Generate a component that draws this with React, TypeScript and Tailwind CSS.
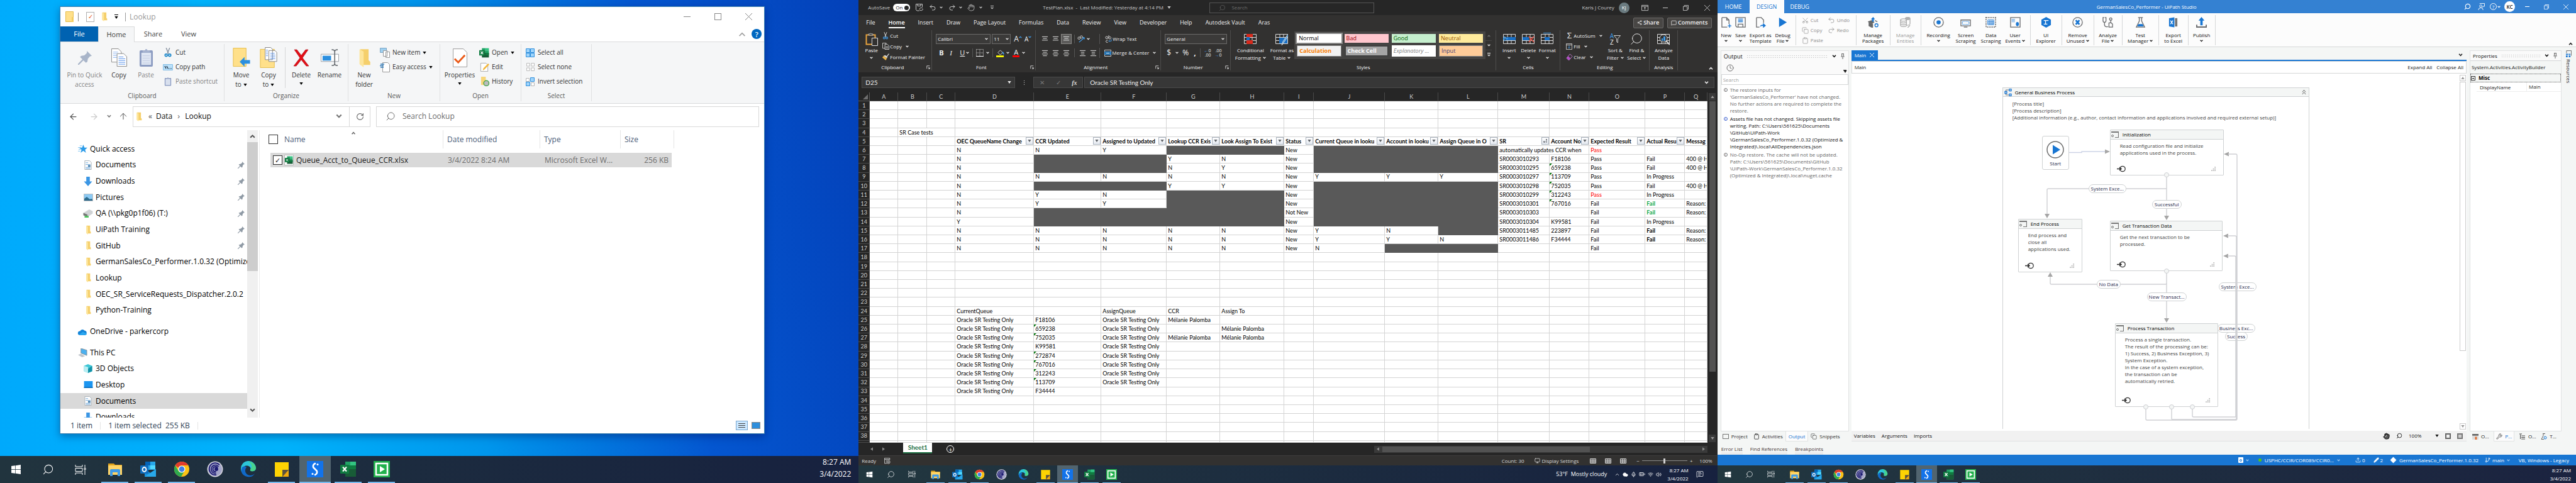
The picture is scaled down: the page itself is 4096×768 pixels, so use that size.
import type { ReactNode } from "react";
import { FaWindows } from "react-icons/fa";
import {
  Search, ArrowLeft, ArrowRight, ArrowUp, RotateCw, Undo2, Redo2, Hand, Wrench, Clock,
  Scissors, Copy, Clipboard, MessageSquare, Share2, GitBranch, Pencil, Upload,
  ChevronUp, Cloud, BatteryFull, Wifi, Volume2, Mic, MessageSquareText, Monitor,
} from "lucide-react";

/* ---------- shared bits ---------- */

function Chev({ className = "" }: { className?: string }) {
  return (
    <svg viewBox="0 0 8 6" className={`h-[4px] w-[5px] shrink-0 ${className}`} fill="none" stroke="currentColor" strokeWidth="1.8">
      <path d="M1 1l3 3 3-3" />
    </svg>
  );
}

function Tri({ className = "" }: { className?: string }) {
  return (
    <svg viewBox="0 0 8 6" className={`h-[4px] w-[6px] shrink-0 ${className}`} fill="currentColor">
      <path d="M0 0h8L4 6z" />
    </svg>
  );
}

function Folder({ className = "" }: { className?: string }) {
  return (
    <svg viewBox="0 0 16 24" className={`shrink-0 ${className}`} preserveAspectRatio="none">
      <path d="M3 1h10v14l2 2v4H3z" fill="#f5cf6b" />
      <path d="M2 1l5 3v20l-5-4z" fill="#fde59b" />
    </svg>
  );
}

function Pages({ className = "" }: { className?: string }) {
  return (
    <svg viewBox="0 0 28 32" className={className} fill="#fff" stroke="#8a8a8a">
      <path d="M1.500 1.500h11l5 5v17h-16z" />
      <path d="M4 7h8M4 10h10M4 13h10M4 16h8" stroke="#8fb6ef" />
      <path d="M10.500 9.500h11l5 5v16h-16z" />
      <path d="M13 15h8M13 18h11M13 21h11M13 24h11M13 27h11" stroke="#5a93ea" />
    </svg>
  );
}

function ClipIcon({ className = "", tint = "#8d9dc2" }: { className?: string; tint?: string }) {
  return (
    <svg viewBox="0 0 24 32" className={className}>
      <rect x="1" y="4" width="22" height="27" rx="2" fill={tint} />
      <rect x="4" y="8" width="16" height="20" fill="#dfe6f3" />
      <path d="M6 13h12M6 17h12M6 21h12M6 25h12" stroke="#c3cde2" />
      <path d="M6 8V4h4a2 2 0 014 0h4v4z" fill="#a5b2cf" />
    </svg>
  );
}

function DocIcon() {
  return (
    <svg viewBox="0 0 14 16" className="h-[15px] w-[14px]">
      <path d="M1.500.5h8l3 3v12h-11z" fill="#fdfdfd" stroke="#a9b1b8" />
      <path d="M3 4h4M3 7h8M3 12h8M3 14h8" stroke="#6fa9dc" />
      <path d="M7 8h4v3H7z" fill="#3c79a8" />
    </svg>
  );
}

function DownIcon() {
  return (
    <svg viewBox="0 0 14 16" className="h-[15px] w-[14px]" fill="#3b96e4">
      <path d="M4 0h6v8h4l-7 8-7-8h4z" />
    </svg>
  );
}

function Pin() {
  return (
    <svg viewBox="0 0 14 14" className="h-[11px] w-[11px]" fill="#8f9aa5">
      <path d="M9 0l5 5-2 .5-2 2.500-.5 3L8 12 5.500 9.500 1 14H0v-1l4.500-4.500L2 6l1.500-1 3-.5L9 2z" />
    </svg>
  );
}

function ExcelLogo({ className = "" }: { className?: string }) {
  return (
    <svg viewBox="0 0 26 26" className={className}>
      <rect x="7" y="1" width="9" height="6" fill="#21a366" />
      <rect x="16" y="1" width="9" height="6" fill="#33c481" />
      <rect x="7" y="7" width="9" height="6" fill="#107c41" />
      <rect x="16" y="7" width="9" height="6" fill="#21a366" />
      <rect x="7" y="13" width="18" height="12" fill="#185c37" />
      <rect x="16" y="13" width="9" height="6" fill="#107c41" />
      <rect x="0" y="6" width="14" height="14" rx="1" fill="#107c41" />
      <path d="M4 9.500l6 7M10 9.500l-6 7" stroke="#fff" strokeWidth="2" />
    </svg>
  );
}

/* ---------- taskbar ---------- */

const appIcons: { name: string; open?: boolean; active?: boolean; art: ReactNode }[] = [
  {
    name: "File Explorer", open: true,
    art: (<><path d="M2 4h9l2 2h11v5H2z" fill="#e0a21a" /><path d="M2 7h22v15H2z" fill="#ffd567" /><path d="M5 15a2 2 0 012-2h12a2 2 0 012 2v9h-4v-6H9v6H5z" fill="#3f9be8" /></>),
  },
  {
    name: "Outlook", open: true,
    art: (<><path d="M8 1h16v13H8z" fill="#28a8ea" /><path d="M8 1h8v6H8z" fill="#0364b8" /><path d="M16 7h8v6h-8z" fill="#50d9ff" /><path d="M7 13l9 6 9-6v12H7z" fill="#1490df" /><path d="M7 25l18-12v12z" fill="#28a8ea" /><rect x="0" y="7" width="13" height="13" rx="1" fill="#0f6cbd" /><ellipse cx="6.500" cy="13.500" rx="3" ry="3.500" fill="none" stroke="#fff" strokeWidth="1.800" /></>),
  },
  {
    name: "Chrome", open: true,
    art: (<><circle cx="13" cy="13" r="12" fill="#fbc116" /><path d="M2.600 7A12 12 0 0123.400 7H13a6 6 0 00-5.500 4z" fill="#e33b2e" /><path d="M2.600 7A12 12 0 0012 25l5-8.500A6 6 0 017.800 16z" fill="#2da94f" /><circle cx="13" cy="13" r="5.600" fill="#fff" /><circle cx="13" cy="13" r="4.400" fill="#3f7ee8" /></>),
  },
  {
    name: "Eclipse",
    art: (<><circle cx="13" cy="13" r="12.500" fill="#d5d5dd" /><circle cx="13" cy="13" r="11" fill="#a4a6c8" /><path d="M20 6a9.500 9.500 0 10-5 16M18.500 9a6.500 6.500 0 10-4 10.500M17 11a4 4 0 10-2.500 6" fill="none" stroke="#1c1a72" strokeWidth="1.800" /><circle cx="15" cy="13" r="3" fill="#1c1a72" /></>),
  },
  {
    name: "Edge",
    art: (<><path d="M1 13A12 12 0 0125 11c0 5-5 6-8 5-2-1-1-2-.5-4C16 8 10 6 6 9c-3 2-5 5-3 10a11 11 0 01-2-6z" fill="#2cc6d8" /><path d="M12 1a12 12 0 0113 10c0 4-4 6-8 5-2-1-1-2-.5-4 3 0 3-8-4.500-11z" fill="#55d86c" opacity=".7" /><path d="M10 10c-3 3-3 9 2 12 4 2 8 1 11-2-3 5-8 6-12 5C2 23 0 15 3 10c2-2 5-2 7 0z" fill="#1169c8" /></>),
  },
  {
    name: "Sticky Notes", open: true,
    art: (<><path d="M2 2h22v12l-10 11H2z" fill="#fdd303" /><path d="M14 25l10-11v11z" fill="#f1a80d" /><path d="M14 14h10L14 25z" fill="#5c5240" /></>),
  },
  {
    name: "Snagit", open: true, active: true,
    art: (<><rect width="26" height="26" fill="#1273ea" /><path d="M13 4c-4 2-4 6-1 8l3 3M13 22c4-2 4-6 1-8l-3-3" fill="none" stroke="#fff" strokeWidth="2.600" strokeLinecap="round" /><circle cx="17" cy="5.500" r="1.500" fill="#fff" /><circle cx="9" cy="20.500" r="1.500" fill="#fff" /></>),
  },
  {
    name: "Excel", open: true,
    art: (<><path d="M8 1h17v24H8z" fill="#21a366" /><path d="M8 7h17v6H8z" fill="#107c41" /><path d="M8 13h17v12H8z" fill="#185c37" /><path d="M16 1h9v6h-9z" fill="#33c481" /><rect y="6" width="14" height="14" rx="1" fill="#107c41" /><path d="M4 9.500l6 7M10 9.500l-6 7" stroke="#fff" strokeWidth="2" /></>),
  },
  {
    name: "Recorder", open: true,
    art: (<><rect width="26" height="26" fill="#22b14c" /><rect x="4" y="4" width="18" height="18" fill="none" stroke="#fff" strokeWidth="2.500" /><path d="M10 8l8 5-8 5z" fill="#fff" /></>),
  },
];

function Taskbar({ large = false, tone, children }: { large?: boolean; tone: string; children: ReactNode }) {
  const sys = large ? "w-[51px]" : "w-[34px]";
  const sysIcon = large ? "size-[17px]" : "size-[11px]";
  return (
    <nav aria-label="Taskbar" className={`flex shrink-0 text-white ${tone} ${large ? "h-[43px]" : "h-[28px]"}`}>
      <button aria-label="Start" className={`flex items-center justify-center ${sys}`}><FaWindows className={sysIcon} /></button>
      <button aria-label="Search" className={`flex items-center justify-center ${sys}`}><Search strokeWidth={1.3} className={`-scale-x-100 ${large ? "size-[19px]" : "size-[13px]"}`} /></button>
      <button aria-label="Task View" className={`mr-[3px] flex items-center justify-center ${sys}`}>
        <svg viewBox="0 0 18 18" className={large ? "size-[18px]" : "size-[12px]"} fill="none" stroke="currentColor">
          <path d="M1 1v3h11V1M1 17v-3h11v3M1 6.500h11v5H1zM16 1v4M16 10v7M15 6h2v3h-2z" />
        </svg>
      </button>
      {appIcons.map((a) => (
        <button key={a.name} aria-label={a.name} className={`flex flex-col items-center ${large ? "w-[53px]" : "w-[35px]"}`}>
          <span className={`flex flex-1 items-center justify-center pt-[1px] ${a.active ? "bg-[#51646f]" : ""} ${large ? "w-[50px]" : "w-[33px]"}`}>
            <svg viewBox="0 0 26 26" className={large ? "size-[26px]" : "size-[17px]"}>{a.art}</svg>
          </span>
          <span className={`${a.open ? "bg-[#76b9ed]" : ""} ${large ? "h-[2px]" : "h-[1px]"} ${a.active ? (large ? "w-[50px]" : "w-[33px]") : large ? "w-[43px]" : "w-[29px]"}`} />
        </button>
      ))}
      <div className="flex-1" />
      {children}
    </nav>
  );
}

/* ---------- file explorer ---------- */

function FxGroup({ label, w, children }: { label: string; w: string; children: ReactNode }) {
  return (
    <div className={`my-[3px] flex shrink-0 flex-col border-r border-[#e0e1e2] ${w}`}>
      <div className="flex flex-1">{children}</div>
      <div className="h-[17px] text-center leading-[16px] text-[#5a5a5a]">{label}</div>
    </div>
  );
}

function FxBig({ icon, lines, w, dim, drop }: { icon: ReactNode; lines: string[]; w: string; dim?: boolean; drop?: boolean }) {
  return (
    <button className={`flex flex-col items-center pt-[6px] leading-[15px] ${w} ${dim ? "text-[#838383]" : "text-[#333]"}`}>
      <span className="mb-[5px] flex h-[31px] items-center">{icon}</span>
      {lines.map((l, i) => (
        <span key={l} className="flex items-center gap-[3px] whitespace-nowrap">
          {l}
          {drop && i === lines.length - 1 && lines.length > 1 && <Tri className="text-black" />}
        </span>
      ))}
      {drop && lines.length === 1 && <Tri className="mt-[4px] text-black" />}
    </button>
  );
}

function FxSmall({ icon, label, dim, drop }: { icon: ReactNode; label: string; dim?: boolean; drop?: boolean }) {
  return (
    <button className={`flex h-[23px] items-center whitespace-nowrap ${dim ? "text-[#838383]" : "text-[#333]"}`}>
      <span className="mr-[4px] flex w-[16px] justify-center">{icon}</span>
      {label}
      {drop && <Tri className="ml-[4px] text-black" />}
    </button>
  );
}

function NavRow({ icon, label, pin, on, root }: { icon: ReactNode; label: string; pin?: boolean; on?: boolean; root?: boolean }) {
  return (
    <li className={`flex min-h-0 flex-1 items-center ${on ? "bg-[#d9d9d9]" : ""} ${root ? "pl-[27px]" : "pl-[36px]"}`}>
      <span className="mr-[4px] flex w-[16px] shrink-0 justify-center">{icon}</span>
      <a href="#" className="flex-1 overflow-hidden whitespace-nowrap">{label}</a>
      {pin && <span className="mr-[4px]"><Pin /></span>}
    </li>
  );
}

function Explorer() {
  const f = <Folder className="h-[15px] w-[9px]" />;
  return (
    <section aria-label="Lookup folder" className="absolute top-[10px] right-[149px] bottom-[35px] left-[95px] flex flex-col border border-[#3a7fae] bg-white text-[12px] shadow-[0_4px_12px_rgba(0,0,60,0.35)]">
      <header className="flex h-[31px] shrink-0 items-center pl-[8px] text-[#9a9a9a]">
        <svg viewBox="0 0 14 17" className="h-[17px] w-[14px]"><path d="M.5.5h12v16H.5z" fill="#ffe08a" stroke="#e5bd4d" /><path d="M10 9h3v8h-3z" fill="#f3cd62" /></svg>
        <span className="mx-[6px] h-[14px] w-px bg-[#8a8a8a]" />
        <span className="ml-[6px] flex h-[16px] w-[13px] items-center justify-center border border-[#b0b0b0] bg-white text-[10px] text-[#e65a1b]">✓</span>
        <Folder className="ml-[11px] h-[15px] w-[10px]" />
        <span className="ml-[11px] flex flex-col items-center gap-[2px] text-black"><span className="h-px w-[6px] bg-black" /><Tri /></span>
        <span className="mr-[6px] ml-[11px] h-[14px] w-px bg-[#9a9a9a]" />
        <span>Lookup</span>
        <span className="flex-1" />
        <button aria-label="Minimize" className="flex w-[49px] justify-center"><span className="h-px w-[11px] bg-[#8a8a8a]" /></button>
        <button aria-label="Maximize" className="flex w-[49px] justify-center"><span className="size-[11px] border border-[#8a8a8a]" /></button>
        <button aria-label="Close" className="flex w-[49px] justify-center">
          <svg viewBox="0 0 11 11" className="size-[11px]" stroke="#8a8a8a"><path d="M0 0l11 11M11 0L0 11" /></svg>
        </button>
      </header>
      <div className="flex h-[25px] shrink-0 border-b border-[#dadbdc] text-[11px] text-[#444]">
        <button className="w-[60px] bg-[#0062b1] text-white">File</button>
        <button className="-mb-px w-[58px] border border-b-0 border-[#dadbdc] bg-[#f5f6f7]">Home</button>
        <button className="w-[59px]">Share</button>
        <button className="w-[54px]">View</button>
        <span className="flex-1" />
        <svg viewBox="0 0 12 8" className="mt-[9px] mr-[9px] h-[7px] w-[12px]" fill="none" stroke="#a0a0a0" strokeWidth="2"><path d="M1 7l5-5 5 5" /></svg>
        <button aria-label="Help" className="mt-[4px] mr-[4px] size-[16px] rounded-full bg-[#0067c0] text-[11px] leading-[15px] font-semibold text-white">?</button>
      </div>
      <div className="flex h-[98px] shrink-0 border-b border-[#dadbdc] bg-[#f5f6f7] text-[10px]">
        <FxGroup label="Clipboard" w="w-[261px]">
          <FxBig w="w-[77px]" dim lines={["Pin to Quick", "access"]} icon={<svg viewBox="0 0 14 14" className="size-[22px]" fill="#a9b5c9"><path d="M9 0l5 5-2 .5-2 2.500-.5 3L8 12 5.500 9.500 1 14H0v-1l4.500-4.500L2 6l1.500-1 3-.5L9 2z" /></svg>} />
          <FxBig w="w-[32px]" lines={["Copy"]} icon={<Pages className="h-[31px] w-[27px]" />} />
          <FxBig w="w-[54px]" dim lines={["Paste"]} icon={<ClipIcon className="h-[31px] w-[23px]" />} />
          <div className="pt-[2px]">
            <FxSmall label="Cut" icon={<svg viewBox="0 0 12 16" className="h-[15px] w-[12px]" fill="none"><path d="M3 0l4 10M9 0L5 10" stroke="#8b95a3" strokeWidth="1.500" /><circle cx="3" cy="12.500" r="2" stroke="#1a86c9" strokeWidth="1.800" /><circle cx="9" cy="12.500" r="2" stroke="#1a86c9" strokeWidth="1.800" /></svg>} />
            <FxSmall label="Copy path" icon={<svg viewBox="0 0 16 10" className="h-[10px] w-[16px]"><path d="M.5.5h15v9H.5z" fill="#b9e0fa" stroke="#86bfe6" /><path d="M3 3l2 4M6 3l2 4M9 7h1M11 7h1M13 7h1" stroke="#123" strokeWidth="1.200" /></svg>} />
            <FxSmall dim label="Paste shortcut" icon={<ClipIcon className="h-[15px] w-[12px]" />} />
          </div>
        </FxGroup>
        <FxGroup label="Organize" w="w-[197px]">
          <FxBig w="w-[53px]" drop lines={["Move", "to"]} icon={<svg viewBox="0 0 28 32" className="h-[31px] w-[28px]"><path d="M.5.5h21v30H.5z" fill="#ffe08a" stroke="#e5bd4d" /><path d="M11 23l8-8v5h9v6h-9v5z" fill="#2b8fdf" /></svg>} />
          <FxBig w="w-[34px]" drop lines={["Copy", "to"]} icon={<svg viewBox="0 0 28 34" className="h-[33px] w-[28px]"><path d="M.5 3.500h23v30H.5z" fill="#ffe08a" stroke="#e5bd4d" /><path d="M8.500.5h9l3 3v17h-12zM14.500 5.500h10l3 3v15h-13z" fill="#fff" stroke="#888" /><path d="M17 10h7M17 13h8M17 16h8M17 19h8M10 5h3M10 8h3M10 11h3M10 14h3" stroke="#5a93ea" /></svg>} />
          <span className="mt-[5px] ml-[9px] h-[65px] w-px bg-[#d6d7d8]" />
          <FxBig w="w-[50px]" drop lines={["Delete"]} icon={<svg viewBox="0 0 26 28" className="h-[28px] w-[26px]" fill="#e30e17"><path d="M2 1h4l7 9 7-9h4l-9 13 10 13h-4l-8-10-8 10H1l10-13z" stroke="#a8060d" strokeWidth=".6" /></svg>} />
          <FxBig w="w-[40px]" lines={["Rename"]} icon={<svg viewBox="0 0 30 30" className="size-[29px]" fill="none"><path d="M.5 9.500h29v12H.5z" fill="#fff" stroke="#9aa0a6" /><path d="M3 12h14v8H3z" fill="#2b8fdf" /><path d="M18 2c3 0 5 1 5 3v20c0 2-2 3-5 3M28 2c-3 0-5 1-5 3M28 28c-3 0-5-1-5-3" stroke="#5a5f64" strokeWidth="1.500" /></svg>} />
        </FxGroup>
        <FxGroup label="New" w="w-[146px]">
          <FxBig w="w-[50px]" lines={["New", "folder"]} icon={<Folder className="h-[30px] w-[21px]" />} />
          <div className="pt-[2px]">
            <FxSmall drop label="New item" icon={<svg viewBox="0 0 16 16" className="size-[16px]" fill="#fff" stroke="#7fa6c4"><path d="M.5.5h10v7H.5z" fill="#9fd0f0" /><path d="M5.500 4.500h6v9h-6zM9.500 6.500h6v9h-6z" stroke="#999" /></svg>} />
            <FxSmall drop label="Easy access" icon={<svg viewBox="0 0 16 16" className="size-[16px]" fill="#fff" stroke="#999"><path d="M4.500.5h8l3 3v12h-11z" /><path d="M1 3h6M0 5.500h6M1 8h5" stroke="#2f79b8" strokeWidth="1.500" /></svg>} />
          </div>
        </FxGroup>
        <FxGroup label="Open" w="w-[129px]">
          <FxBig w="w-[62px]" drop lines={["Properties"]} icon={<svg viewBox="0 0 24 31" className="h-[30px] w-[23px]"><path d="M.5.5h17l6 6v24H.5z" fill="#fff" stroke="#999" /><path d="M3 17l6 6L20 11" fill="none" stroke="#ea5a18" strokeWidth="3" /></svg>} />
          <div className="pt-[2px]">
            <FxSmall drop label="Open" icon={<ExcelLogo className="size-[16px]" />} />
            <FxSmall label="Edit" icon={<svg viewBox="0 0 16 16" className="size-[15px]"><path d="M1.500 1.500h9l3 3v11h-12z" fill="#fff" stroke="#aaa" /><path d="M5 14l1-4 8-8 2 2-8 8z" fill="#f4b73a" /></svg>} />
            <FxSmall label="History" icon={<svg viewBox="0 0 16 16" className="size-[15px]"><path d="M2 0h8v14H2z" fill="#f7d679" /><circle cx="11" cy="11" r="4.500" fill="#b9bcbf" stroke="#35a33a" strokeWidth="1.300" /></svg>} />
          </div>
        </FxGroup>
        <FxGroup label="Select" w="w-[112px]">
          <div className="pt-[2px] pl-[6px]">
            <FxSmall label="Select all" icon={<svg viewBox="0 0 14 14" className="size-[14px]" fill="#9fd4fb" stroke="#2f8fdc"><path d="M.5.5h6v6h-6zM7.500.5h6v6h-6zM.5 7.500h6v6h-6zM7.500 7.500h6v6h-6z" /></svg>} />
            <FxSmall label="Select none" icon={<svg viewBox="0 0 14 14" className="size-[13px]" fill="#fff" stroke="#b5b5b5"><path d="M.5.5h5v5h-5zM8.500.5h5v5h-5zM.5 8.500h5v5h-5zM8.500 8.500h5v5h-5z" /></svg>} />
            <FxSmall label="Invert selection" icon={<svg viewBox="0 0 14 14" className="size-[14px]"><path d="M.5 1.500h5v5h-5zM8.500 8.500h5v5h-5z" fill="#fff" stroke="#b5b5b5" /><path d="M7.500.5h6v6h-6zM.5 7.500h6v6h-6z" fill="#9fd4fb" stroke="#2f8fdc" /></svg>} />
          </div>
        </FxGroup>
      </div>
      <div className="flex h-[42px] shrink-0 items-center pr-[8px] pb-[2px] pl-[13px] text-[#111]">
        <ArrowLeft className="size-[15px] text-[#555]" />
        <ArrowRight className="ml-[18px] size-[15px] text-[#ccc]" />
        <Chev className="ml-[13px] h-[6px] w-[7px] text-[#777]" />
        <ArrowUp strokeWidth={1.5} className="ml-[11px] size-[16px] text-[#555]" />
        <div className="ml-[7px] flex h-[33px] w-[378px] items-center border border-[#d9d9d9] pl-[4px]">
          <Folder className="h-[15px] w-[10px]" />
          <span className="ml-[10px] text-[#555]">«</span>
          <a href="#" className="ml-[6px]">Data</a>
          <span className="mx-[8px] text-[13px] text-[#666]">›</span>
          <a href="#">Lookup</a>
          <span className="flex-1" />
          <Chev className="mr-[11px] h-[8px] w-[10px] text-[#777]" />
          <button aria-label="Refresh" className="flex h-full w-[33px] items-center justify-center border-l border-[#d9d9d9]"><RotateCw className="size-[13px] text-[#666]" /></button>
        </div>
        <label className="ml-[9px] flex h-[33px] flex-1 items-center border border-[#d9d9d9] pl-[14px] text-[#6d6d6d]">
          <Search strokeWidth={1.5} className="mr-[11px] size-[16px] -scale-x-100" />
          <input aria-label="Search Lookup" placeholder="Search Lookup" className="min-w-0 flex-1 outline-none placeholder:text-[#6d6d6d]" />
        </label>
      </div>
      <div className="flex min-h-0 flex-1">
        <nav aria-label="Folders" className="w-[297px] shrink-0 overflow-hidden pt-[17px] text-black">
          <ul className="flex h-[282px] flex-col">
            <NavRow root label="Quick access" icon={<svg viewBox="0 0 16 16" className="size-[15px]"><path d="M9 1l2 5h5l-4 3.500L13.500 15 9 11.500 4.500 15 6 9.500 2 6h5z" fill="#2b9be8" /><path d="M0 6h5M1 9h4M0 12h4M3 3h4" stroke="#7cc4f3" /></svg>} />
            <NavRow pin label="Documents" icon={<DocIcon />} />
            <NavRow pin label="Downloads" icon={<DownIcon />} />
            <NavRow pin label="Pictures" icon={<svg viewBox="0 0 15 12" className="h-[12px] w-[15px]"><path d="M.5.5h14v11H.5z" fill="#8ccaf4" stroke="#b9bec3" /><path d="M1 8l4-3 5 4 2-1 2 1v2H1z" fill="#2d6b8c" /></svg>} />
            <NavRow pin label="QA (\\pkg0p1f06) (T:)" icon={<svg viewBox="0 0 16 14" className="h-[13px] w-[16px]"><path d="M0 6l10-6 6 3v4l-9 6-7-3z" fill="#cfd2d4" /><path d="M0 6l7 3v4l-7-3z" fill="#777" /><path d="M2 11h7v3H2z" fill="#4cc35c" /></svg>} />
            <NavRow pin label="UiPath Training" icon={f} />
            <NavRow pin label="GitHub" icon={f} />
            <NavRow label="GermanSalesCo_Performer.1.0.32 (Optimize" icon={f} />
            <NavRow label="Lookup" icon={f} />
            <NavRow label="OEC_SR_ServiceRequests_Dispatcher.2.0.2" icon={f} />
            <NavRow label="Python-Training" icon={f} />
          </ul>
          <ul className="mt-[8px] flex h-[26px] flex-col">
            <NavRow root label="OneDrive - parkercorp" icon={<svg viewBox="0 0 18 12" className="h-[11px] w-[17px]"><path d="M5 5a4.500 4.500 0 018-1 4 4 0 01-1 8H4a3.500 3.500 0 011-7z" fill="#1485d8" /><path d="M3 11l7-5 7 4a3 3 0 01-3 2H4z" fill="#2aa7f0" /></svg>} />
          </ul>
          <ul className="mt-[8px] flex h-[128px] flex-col">
            <NavRow root label="This PC" icon={<svg viewBox="0 0 16 15" className="h-[14px] w-[15px]"><path d="M5 0l10 3v9L5 8z" fill="#4ab0f0" stroke="#8a9299" /><path d="M0 11l5-2 7 4-5 2z" fill="#bfc5ca" /></svg>} />
            <NavRow label="3D Objects" icon={<svg viewBox="0 0 14 15" className="h-[14px] w-[14px]"><path d="M7 0l7 3v9l-7 3-7-3V3z" fill="#3fc6d6" /><path d="M0 3l7 2v10l-7-3z" fill="#b9eef2" /><path d="M7 8l7-5v9l-7 3z" fill="#1392a8" /></svg>} />
            <NavRow label="Desktop" icon={<svg viewBox="0 0 15 12" className="h-[11px] w-[15px]"><path d="M0 0h15v12H0z" fill="#1b95f0" /><path d="M0 10h15v2H0z" fill="#0b6fc0" /></svg>} />
            <NavRow on label="Documents" icon={<DocIcon />} />
            <NavRow label="Downloads" icon={<DownIcon />} />
          </ul>
        </nav>
        <div className="mr-[2px] flex w-[17px] shrink-0 flex-col items-center justify-between bg-[#f0f0f0] text-[#555]">
          <span className="flex h-[19px] items-center"><Chev className="h-[7px] w-[9px] rotate-180" /></span>
          <span className="w-full flex-1 bg-[#cdcdcd]" />
          <span className="flex h-[233px] flex-col justify-end pb-[8px]"><Chev className="h-[7px] w-[9px]" /></span>
        </div>
        <div className="flex-1 border-l border-[#ececec]">
          <table className="block">
            <thead className="block text-[#4c607a]">
              <tr className="flex h-[29px] items-center">
                <th className="flex h-full w-[292px] items-center border-r border-[#e5e5e5] pl-[14px] font-normal">
                  <input type="checkbox" aria-label="Select all files" className="size-[15px] appearance-none border border-[#333]" />
                  <span className="ml-[10px] w-[106px] text-left">Name</span>
                  <Chev className="mb-[20px] h-[5px] w-[8px] rotate-180 text-[#666]" />
                </th>
                <th className="flex h-full w-[154px] items-center border-r border-[#e5e5e5] pl-[6px] font-normal">Date modified</th>
                <th className="flex h-full w-[128px] items-center border-r border-[#e5e5e5] pl-[6px] font-normal">Type</th>
                <th className="flex h-full w-[85px] items-center border-r border-[#e5e5e5] pl-[6px] font-normal">Size</th>
              </tr>
            </thead>
            <tbody className="block pt-[7px] pl-[17px] text-[#6d6d6d]">
              <tr className="flex h-[23px] w-[638px] items-center bg-[#d9d9d9]">
                <td className="flex w-[275px] items-center pl-[4px] text-[#1a1a1a]">
                  <label className="flex size-[15px] items-center justify-center border border-[#333] bg-white text-[11px] leading-none">
                    <input type="checkbox" defaultChecked className="sr-only" />✓
                  </label>
                  <span className="mx-[3px] flex h-[17px] w-[15px] items-center justify-center border border-[#bbb] bg-white"><ExcelLogo className="size-[13px]" /></span>
                  <span className="ml-[1px]">Queue_Acct_to_Queue_CCR.xlsx</span>
                </td>
                <td className="w-[154px] pl-[7px]">3/4/2022 8:24 AM</td>
                <td className="w-[128px] pl-[7px]">Microsoft Excel W...</td>
                <td className="flex-1 pr-[5px] text-right">256 KB</td>
              </tr>
            </tbody>
          </table>
        </div>
      </div>
      <footer className="flex h-[25px] shrink-0 items-center text-[#2f4358]">
        <span className="pl-[16px]">1 item</span>
        <span className="mx-[12px] h-[12px] w-px bg-[#e5e5e5]" />
        <span>1 item selected&nbsp; 255 KB</span>
        <span className="mx-[12px] h-[12px] w-px bg-[#e5e5e5]" />
        <span className="flex-1" />
        <span className="mr-[6px] flex flex-col gap-[2px] border border-[#7aa7cf] bg-[#cce8ff] p-[3px]"><span className="h-px w-[11px] bg-[#444]" /><span className="h-px w-[11px] bg-[#444]" /><span className="h-px w-[11px] bg-[#444]" /></span>
        <span className="mr-[6px] h-[11px] w-[14px] border border-[#888] bg-[#2f8fdc]" />
      </footer>
    </section>
  );
}

/* ---------- spreadsheet ---------- */

const colGrid = "grid grid-cols-[18px_45px_46px_45px_125px_107px_104px_85px_102px_47px_113px_85px_95px_82px_63px_89px_63px_minmax(0,1fr)]";

const heads: Record<string, string> = {
  D: "OEC QueueName Change", E: "CCR Updated", F: "Assigned to Updated", G: "Lookup CCR Exis", H: "Look Assign To Exist",
  I: "Status", J: "Current Queue in looku", K: "Account in looku", L: "Assign Queue in O", M: "SR", N: "Account No",
  O: "Expected Result", P: "Actual Resu", Q: "Messag",
};
const letters = "ABCDEFGHIJKLMNOPQ".split("");
const S = "Oracle SR Testing Only";
const MP = "Mélanie Palomba";

/* "#" is a filled cell, "!" flags number-as-text, "r:" "g:" "b:" set the text style */
const body: Record<number, string[]> = {
  6: ["N", "N", "Y", "#", "#", "New", "#", "#", "#", "automatically updates CCR when", "<", "r:Pass"],
  7: ["N", "#", "#", "Y", "N", "New", "#", "#", "#", "SR0003010293", "F18106", "Pass", "Fail", "400 @ H"],
  8: ["N", "#", "#", "N", "Y", "New", "#", "#", "#", "SR0003010295", "!659238", "Pass", "Fail", "400 @ H"],
  9: ["N", "N", "N", "N", "N", "New", "Y", "Y", "Y", "SR0003010297", "!113709", "Pass", "In Progress"],
  10: ["N", "#", "#", "Y", "Y", "New", "#", "#", "#", "SR0003010298", "!752035", "Pass", "Fail", "400 @ H"],
  11: ["N", "Y", "N", "#", "#", "New", "#", "#", "#", "SR0003010299", "!312243", "r:Pass", "In Progress"],
  12: ["N", "Y", "Y", "#", "#", "New", "#", "#", "#", "SR0003010301", "!767016", "Fail", "g:Fail", "Reason:"],
  13: ["N", "#", "#", "#", "#", "Not New", "#", "#", "#", "SR0003010303", "", "Fail", "g:Fail", "Reason:"],
  14: ["Y", "#", "#", "#", "#", "New", "#", "#", "#", "SR0003010304", "K99581", "Fail", "In Progress"],
  15: ["N", "N", "N", "N", "N", "New", "Y", "N", "#", "SR0003011485", "223897", "Fail", "b:Fail", "Reason:"],
  16: ["N", "N", "N", "N", "N", "New", "Y", "Y", "N", "SR0003011486", "F34444", "Fail", "b:Fail", "Reason:"],
  17: ["N", "N", "N", "N", "N", "New", "N", "#", "#", "", "", "Fail"],
  24: ["CurrentQueue", "", "AssignQueue", "CCR", "Assign To"],
  25: [S, "F18106", S, MP],
  26: [S, "!659238", S, "", MP],
  27: [S, "!752035", S, MP, MP],
  28: [S, "K99581", S],
  29: [S, "!272874", S],
  30: [S, "!767016", S],
  31: [S, "!312243", S],
  32: [S, "!113709", S],
  33: [S, "F34444"],
};

function Cell({ v }: { v: string }) {
  if (v === "#") return <td className="border-r border-b border-[#595959] bg-[#595959]" />;
  const tone = v.startsWith("r:") ? "text-[#ff0000]" : v.startsWith("g:") ? "font-bold text-[#12a84a]" : v.startsWith("b:") ? "font-bold" : "";
  const flag = v.startsWith("!");
  const text = flag ? v.slice(1) : v[1] === ":" ? v.slice(2) : v;
  return (
    <td className={`relative flex items-center overflow-hidden border-r border-b border-[#d4d4d4] pl-[2px] whitespace-nowrap ${tone}`}>
      {flag && <svg viewBox="0 0 4 4" className="absolute top-0 left-0 size-[4px]" fill="#0b7a12"><path d="M0 0h4L0 4z" /></svg>}
      {text}
    </td>
  );
}

function SheetRow({ n }: { n: number }) {
  const data = body[n] ?? [];
  return (
    <tr className={`${colGrid} min-h-0 ${n === 39 ? "h-[3px] overflow-hidden" : "flex-1"}`}>
      <th className="flex items-center justify-center overflow-hidden border-r border-b border-[#4a4a4a] bg-[#262626] font-normal text-[#d0d0d0]">{n < 39 && n}</th>
      {letters.map((c, i) => {
        if (n === 5 && heads[c])
          return (
            <td key={c} className="flex items-center justify-between overflow-hidden border-r border-b border-[#d4d4d4] pl-[2px] font-bold whitespace-nowrap">
              <span className="min-w-0 overflow-hidden">{heads[c]}</span>
              {c !== "Q" && (
                <button aria-label={`Filter ${heads[c]}`} className="flex h-[12px] w-[12px] shrink-0 items-center justify-center border border-[#a9b2bd] bg-gradient-to-b from-white to-[#e4e9f0] text-[#5f6368]">
                  {c === "M" ? <svg viewBox="0 0 8 8" className="size-[8px]" fill="none" stroke="#5f6368"><path d="M6 7V1M5 2l1-1 1 1M1 5h3L2.500 7z" /></svg> : <Tri className="h-[4px] w-[6px]" />}
                </button>
              )}
            </td>
          );
        if (n === 4 && c === "B") return <td key={c} className="col-span-2 flex items-center border-r border-b border-[#d4d4d4] pl-[2px]">SR Case tests</td>;
        if (n === 4 && c === "C") return null;
        const v = i < 3 ? "" : (data[i - 3] ?? "");
        if (v === "<") return null;
        if (v.startsWith("auto")) return <td key={c} className="col-span-2 flex items-center overflow-hidden border-r border-b border-[#d4d4d4] pl-[2px] whitespace-nowrap">{v}</td>;
        return <Cell key={c} v={v} />;
      })}
    </tr>
  );
}

function XGroup({ label, w, launch, children }: { label: string; w: string; launch?: boolean; children: ReactNode }) {
  return (
    <div className={`flex h-[64px] shrink-0 flex-col border-r border-[#4d4c4b] ${w}`}>
      <div className="flex h-[54px]">{children}</div>
      <div className="flex h-[11px] items-center leading-[10px]">
        <span className="flex-1 text-center">{label}</span>
        {launch && <svg viewBox="0 0 8 8" className="mr-[2px] size-[6px]" fill="none" stroke="currentColor"><path d="M1 7V1h6M4 4l3 3M7 4v3H4" /></svg>}
      </div>
    </div>
  );
}

function XBig({ icon, lines, w, drop }: { icon: ReactNode; lines: string[]; w: string; drop?: boolean }) {
  return (
    <button className={`flex flex-col items-center leading-[12px] whitespace-nowrap ${w}`}>
      <span className="mt-[2px] flex h-[24px] items-center">{icon}</span>
      {lines.map((l, i) => (
        <span key={l} className="flex items-center gap-[3px]">{l}{drop && lines.length > 1 && i === lines.length - 1 && <Chev />}</span>
      ))}
      {drop && lines.length === 1 && <Chev className="mt-[4px]" />}
    </button>
  );
}

function XSmall({ icon, label, drop }: { icon: ReactNode; label: string; drop?: boolean }) {
  return (
    <button className="flex h-[17px] items-center whitespace-nowrap">
      <span className="mr-[1px] flex w-[12px] justify-center">{icon}</span>
      {label}
      {drop && <Chev className="ml-[6px]" />}
    </button>
  );
}

function Lines({ w = [10, 7, 10, 7], on }: { w?: number[]; on?: boolean }) {
  return (
    <span className={`flex h-[16px] w-[17px] items-center justify-center ${on ? "border border-[#8a8886] bg-[#5c5b5a]" : ""}`}>
      <svg viewBox="0 0 12 12" className="size-[11px]" stroke="#e8e8e8" strokeWidth="1">
        {w.map((x, i) => (
          <path key={i} d={`M${6 - x / 2} ${1.5 + i * 3}h${x}`} />
        ))}
      </svg>
    </span>
  );
}

function TableArt({ children }: { children?: ReactNode }) {
  return (
    <svg viewBox="0 0 20 20" className="size-[20px]" fill="none" stroke="#d8d8d8">
      <path d="M.5 2.500h19v15H.5zM.5 7.500h19M.5 12.500h19M7 2.500v15M13 2.500v15" />
      {children}
    </svg>
  );
}

const styles: [string, string][] = [
  ["Normal", "bg-white text-black outline-2 outline-[#8a8a8a]"],
  ["Bad", "bg-[#ffc7ce] text-[#9c0006]"],
  ["Good", "bg-[#c6efce] text-[#006100]"],
  ["Neutral", "bg-[#ffeb9c] text-[#9c5700]"],
  ["Calculation", "border border-[#7f7f7f] bg-[#f2f2f2] font-bold text-[#fa7d00]"],
  ["Check Cell", "border-2 border-double border-[#3f3f3f] bg-[#a5a5a5] font-bold text-white"],
  ["Explanatory ...", "bg-white text-[#7f7f7f] italic"],
  ["Input", "border border-[#7f7f7f] bg-[#ffcc99] text-[#3f3f76]"],
];

function TableMini() {
  return <svg viewBox="0 0 10 8" className="h-[8px] w-[10px]" fill="none" stroke="#ddd"><path d="M.5.5h9v7h-9zM.5 3h9M.5 5.500h9M3.500.5v7M6.500.5v7" /></svg>;
}

function Excel() {
  return (
    <section aria-label="TestPlan.xlsx" className="flex min-h-0 flex-1 flex-col bg-[#262626] text-[8px] text-[#f0f0f0]">
      <header className="flex h-[24px] shrink-0 items-center pl-[15px] text-[#c6c6c6]">
        <span>AutoSave</span>
        <button aria-label="AutoSave on" className="ml-[5px] flex h-[12px] w-[27px] items-center justify-between rounded-full bg-white pr-[2px] pl-[4px] text-[8px] text-[#262626]">On<span className="size-[7px] rounded-full bg-[#262626]" /></button>
        <svg viewBox="0 0 12 12" className="ml-[9px] size-[12px]" fill="none" stroke="currentColor"><path d="M6 11H2L.5 9.500V.5h10V5M3 .5v3h5v-3M6 9a3 3 0 015-2M11.500 8a3 3 0 01-5 2" /></svg>
        <Undo2 className="ml-[9px] size-[12px]" /><Chev className="ml-[5px]" />
        <Redo2 className="ml-[9px] size-[12px]" /><Chev className="ml-[5px]" />
        <Hand className="ml-[8px] size-[12px]" strokeWidth={1.5} /><Chev className="ml-[7px]" />
        <span className="ml-[13px] flex flex-col items-center gap-[1px]"><span className="h-px w-[5px] bg-current" /><Chev /></span>
        <span className="ml-[78px] flex items-center gap-[6px] whitespace-nowrap">TestPlan.xlsx&nbsp; -&nbsp; Last Modified: Yesterday at 4:14 PM <Tri className="h-[3px] w-[4px]" /></span>
        <label className="ml-auto flex h-[17px] w-[262px] items-center border border-[#555] pl-[14px]">
          <Search strokeWidth={1.3} className="mr-[9px] size-[11px] -scale-x-100 text-[#6c6c6c]" />
          <input aria-label="Search" placeholder="Search" className="min-w-0 flex-1 outline-none placeholder:text-[#6c6c6c]" />
        </label>
        <span className="ml-[330px]">Karis J Courey</span>
        <span className="ml-[7px] flex size-[17px] items-center justify-center rounded-full bg-[#6b7b80] text-[8px] text-white">KJ</span>
        <svg viewBox="0 0 12 12" className="ml-[19px] size-[11px]" fill="none" stroke="currentColor"><path d="M.5 1.500h11v9H.5zM.5 3.500h11M6 9V5M4.500 6.500L6 5l1.500 1.500" /></svg>
        <span className="ml-[23px] h-px w-[8px] bg-current" />
        <svg viewBox="0 0 10 10" className="ml-[24px] size-[9px]" fill="none" stroke="currentColor"><path d="M.5 2.500h7v7h-7zM2.500 2V.5h7v7H8" /></svg>
        <svg viewBox="0 0 10 10" className="mr-[12px] ml-[25px] size-[9px]" stroke="currentColor"><path d="M0 0l10 10M10 0L0 10" /></svg>
      </header>
      <div className="flex h-[24px] shrink-0 items-center gap-[21px] bg-[#323130] pl-[12px] text-[9px] whitespace-nowrap">
        {["File", "Home", "Insert", "Draw", "Page Layout", "Formulas", "Data", "Review", "View", "Developer", "Help", "Autodesk Vault", "Aras"].map((t) => (
          <button key={t} className={t === "Home" ? "border-b-2 border-white pt-[2px] font-semibold text-white" : ""}>{t}</button>
        ))}
        <span className="flex-1" />
        <button className="-mr-[15px] flex h-[17px] w-[48px] items-center justify-center gap-[2px] rounded-[2px] border border-[#6b6a69] bg-[#484644] font-semibold"><Share2 className="size-[8px]" />Share</button>
        <button className="mr-[9px] flex h-[17px] w-[71px] items-center justify-center gap-[2px] rounded-[2px] border border-[#6b6a69] bg-[#484644] font-semibold"><MessageSquare className="size-[9px]" />Comments</button>
      </div>
      <div className="flex h-[67px] shrink-0 bg-[#323130]">
        <XGroup label="Clipboard" w="w-[117px]" launch>
          <XBig w="ml-[4px] w-[33px]" drop lines={["Paste"]} icon={<svg viewBox="0 0 20 22" className="h-[22px] w-[20px]" fill="none"><path d="M1.500 4.500h14v15h-14z" stroke="#e8a33d" strokeWidth="2" /><path d="M5 5V3h2a2 2 0 013 0h2v2z" stroke="#bbb" fill="#323130" /><path d="M10.500 9.500h9v12h-9z" fill="#323130" stroke="#ddd" /></svg>} />
          <div>
            <XSmall label="Cut" icon={<svg viewBox="0 0 12 14" className="h-[12px] w-[10px]" fill="none"><path d="M3.500 0L7 9M8.500 0L5 9" stroke="#d0d0d0" strokeWidth="1.200" /><circle cx="3.500" cy="11" r="1.800" stroke="#3f9be8" strokeWidth="1.300" /><circle cx="8.500" cy="11" r="1.800" stroke="#3f9be8" strokeWidth="1.300" /></svg>} />
            <XSmall drop label="Copy" icon={<svg viewBox="0 0 12 12" className="size-[11px]" fill="#323130" stroke="#d8d8d8"><path d="M.5.5h6v9h-6z" /><path d="M4.500 2.500h4l3 3v6h-7z" /><path d="M6 7h4M6 9h4" /></svg>} />
            <XSmall label="Format Painter" icon={<svg viewBox="0 0 12 12" className="size-[11px]"><path d="M7 5l4-5 1 1-4 5z" fill="#ccc" /><path d="M2 4l6 4-2 4-6-5z" fill="#e8b24a" /><path d="M2 4l3-1 4 3-1 2z" fill="#ddd" /></svg>} />
          </div>
        </XGroup>
        <XGroup label="Font" w="w-[165px]" launch>
          <div className="flex flex-col gap-[6px] pt-[6px] pl-[6px]">
            <div className="flex items-center">
              <span className="flex h-[16px] w-[87px] items-center border border-[#6b6a69] bg-[#3b3a39] pr-[3px]">
                <select aria-label="Font name" className="min-w-0 flex-1 appearance-none pl-[2px] outline-none"><option>Calibri</option></select><Chev />
              </span>
              <span className="ml-[2px] flex h-[16px] w-[30px] items-center border border-[#6b6a69] bg-[#3b3a39] pr-[2px]">
                <select aria-label="Font size" className="min-w-0 flex-1 appearance-none pl-[2px] outline-none"><option>11</option></select><Chev />
              </span>
              <span className="ml-[5px] text-[12px] leading-[16px]">A</span><Chev className="mb-[7px] rotate-180 text-[#3f9be8]" />
              <span className="ml-[4px] text-[10px] leading-[16px]">A</span><Chev className="mb-[7px] text-[#3f9be8]" />
            </div>
            <div className="flex h-[16px] items-center text-[11px]">
              <b className="ml-[5px] w-[17px]">B</b><i className="w-[16px] font-['Liberation_Serif',serif]">I</i><u className="w-[10px]">U</u><Chev />
              <span className="mx-[5px] h-[14px] w-px bg-[#555]" />
              <svg viewBox="0 0 12 12" className="size-[12px]" fill="none" stroke="#ccc"><path d="M.5.5h11v11M.5.5v11M6 0v12M0 6h12" strokeDasharray="1 1" /><path d="M0 11.500h12" stroke="#fff" /></svg><Chev className="ml-[4px]" />
              <span className="mx-[5px] h-[14px] w-px bg-[#555]" />
              <svg viewBox="0 0 14 14" className="size-[13px]"><path d="M3 6l4-4 4 4-4 4z" fill="none" stroke="#ddd" /><path d="M11 5l2 4" stroke="#3f9be8" strokeWidth="2" /><path d="M0 11h13v3H0z" fill="#ff0" /></svg><Chev className="ml-[3px]" />
              <span className="ml-[5px] flex flex-col items-center leading-[11px]">A<span className="h-[3px] w-[11px] bg-[#f00]" /></span><Chev className="ml-[4px]" />
            </div>
          </div>
        </XGroup>
        <XGroup label="Alignment" w="w-[199px]" launch>
          <div className="flex flex-col gap-[6px] pt-[6px] pl-[6px]">
            <div className="flex h-[16px] items-center">
              <Lines w={[10, 7, 10]} /><Lines w={[10, 7, 10]} /><Lines on w={[10, 7, 10]} />
              <span className="mx-[4px] h-[14px] w-px bg-[#555]" />
              <svg viewBox="0 0 14 14" className="size-[13px]" fill="none"><path d="M3 12L12 4M12 4H9M12 4v3" stroke="#3f9be8" strokeWidth="1.300" /><circle cx="3" cy="5" r="2" stroke="#ddd" /><circle cx="7" cy="3" r="2" stroke="#ddd" /></svg><Chev className="ml-[2px]" />
              <span className="ml-[15px] h-[16px] w-px bg-[#555]" />
              <span className="ml-[7px]"><XSmall label="Wrap Text" icon={<svg viewBox="0 0 12 14" className="h-[13px] w-[11px]" fill="none"><circle cx="3" cy="4" r="2" stroke="#ddd" /><path d="M6.500 0v6M6.500 4a2 2 0 110 1M5 9a2 2 0 100 3" stroke="#ddd" /><path d="M11 7v3H7M8 8.500L6.500 10 8 11.500" stroke="#3f9be8" /></svg>} /></span>
            </div>
            <div className="flex h-[16px] items-center">
              <Lines /><Lines /><Lines />
              <span className="mx-[4px] h-[14px] w-px bg-[#555]" />
              <Lines w={[10, 6, 6, 10]} /><Lines w={[10, 6, 6, 10]} />
              <span className="ml-[1px] h-[16px] w-px bg-[#555]" />
              <span className="ml-[6px]"><XSmall drop label="Merge & Center" icon={<svg viewBox="0 0 12 12" className="size-[11px]" fill="none"><path d="M.5.500h11v11H.5z" stroke="#ddd" /><path d="M.5 3.500h11v5H.5z" fill="#1668a8" stroke="#3f9be8" /><path d="M3 6h6" stroke="#fff" /></svg>} /></span>
            </div>
          </div>
        </XGroup>
        <XGroup label="Number" w="w-[111px]" launch>
          <div className="flex flex-col gap-[6px] pt-[6px] pl-[6px]">
            <span className="flex h-[16px] w-[99px] items-center border border-[#6b6a69] bg-[#3b3a39] pr-[3px]">
              <select aria-label="Number format" className="min-w-0 flex-1 appearance-none pl-[2px] outline-none"><option>General</option></select><Chev />
            </span>
            <div className="flex h-[16px] items-center text-[12px]">
              <span className="ml-[3px]">$</span><Chev className="ml-[7px]" />
              <span className="ml-[6px]">%</span><b className="ml-[8px]">,</b>
              <span className="mx-[6px] h-[14px] w-px bg-[#555]" />
              <span className="flex flex-col text-right text-[7px] leading-[7px]"><span><span className="text-[#3f9be8]">←</span>0</span><span>.00</span></span>
              <span className="ml-[6px] flex flex-col text-right text-[7px] leading-[7px]"><span>.00</span><span><span className="text-[#3f9be8]">→</span>0</span></span>
            </div>
          </div>
        </XGroup>
        <XGroup label="Styles" w="w-[422px]">
          <XBig w="w-[62px]" drop lines={["Conditional", "Formatting"]} icon={<TableArt><path d="M4 2h10v5H4zM4 12h10v6H4z" fill="#d92a1c" stroke="none" /><path d="M4 7h5v5H4z" fill="#1a6fc4" stroke="none" /></TableArt>} />
          <XBig w="w-[38px]" drop lines={["Format as", "Table"]} icon={<TableArt><path d="M6 8h13v9H6z" fill="#1a6fc4" stroke="none" /><path d="M10 20l2-6 8-12 1 2-8 12z" fill="#3f9be8" /></TableArt>} />
          <div className="mt-[2px] ml-[1px] flex h-[44px] w-[314px] bg-[#454443]">
            <div className="grid flex-1 grid-cols-4 gap-x-[5px] gap-y-[4px] px-[4px] py-[4px] text-[9px]">
              {styles.map(([s, c]) => (
                <button key={s} className={`overflow-hidden px-[3px] text-left leading-[14px] whitespace-nowrap ${c}`}>{s}</button>
              ))}
            </div>
            <div className="flex w-[10px] flex-col gap-[1px]">
              <span className="flex flex-1 items-center justify-center bg-[#323130]"><Chev className="rotate-180 text-[#777]" /></span>
              <span className="flex flex-1 items-center justify-center bg-[#323130]"><Chev /></span>
              <span className="flex flex-1 flex-col items-center justify-center gap-[1px] bg-[#323130]"><span className="h-px w-[5px] bg-white" /><Chev /></span>
            </div>
          </div>
        </XGroup>
        <XGroup label="Cells" w="w-[102px]">
          <XBig w="ml-[5px] w-[31px]" drop lines={["Insert"]} icon={<TableArt><path d="M4 7h16v5H4z" fill="#1a6fc4" stroke="none" /><path d="M8 9.500H0M3 6L0 9.500 3 13" stroke="#3f9be8" strokeWidth="1.500" /></TableArt>} />
          <XBig w="w-[30px]" drop lines={["Delete"]} icon={<TableArt><path d="M1 7h10v5H1z" fill="#1a6fc4" stroke="none" /><path d="M11 6l8 9M19 6l-8 9" stroke="#e04a3f" strokeWidth="1.500" /></TableArt>} />
          <XBig w="w-[30px]" drop lines={["Format"]} icon={<TableArt><path d="M6 7h8v5H6z" fill="#1a6fc4" stroke="none" /><path d="M4 .5h12" stroke="#3f9be8" /></TableArt>} />
        </XGroup>
        <XGroup label="Editing" w="w-[142px]">
          <div className="w-[68px] pl-[8px]">
            <XSmall drop label="AutoSum" icon={<span className="text-[13px] leading-none">Σ</span>} />
            <XSmall drop label="Fill" icon={<svg viewBox="0 0 12 12" className="size-[10px]" fill="none" stroke="#ddd"><path d="M.5.500h11v11H.5zM.5 3h11" /><path d="M6 4v5M4 7.500L6 9.500l2-2" stroke="#3f9be8" /></svg>} />
            <XSmall drop label="Clear" icon={<svg viewBox="0 0 12 12" className="size-[11px]"><path d="M1 8l6-7 4 4-6 7z" fill="none" stroke="#c17bd0" /><path d="M1 8l3-3.500 4 4L5 12z" fill="#b14fc5" /></svg>} />
          </div>
          <XBig w="w-[38px]" drop lines={["Sort &", "Filter"]} icon={<span className="flex items-center"><span className="flex flex-col text-[10px] leading-[10px]"><span className="text-[#3f9be8]">A</span><span>Z</span></span><svg viewBox="0 0 12 14" className="h-[13px] w-[11px]" fill="none" stroke="#ddd"><path d="M.5.5h11L7 6v7l-2-2V6z" /></svg></span>} />
          <XBig w="w-[30px]" drop lines={["Find &", "Select"]} icon={<Search strokeWidth={1} className="size-[22px] -scale-x-100" />} />
        </XGroup>
        <XGroup label="Analysis" w="w-[45px]">
          <XBig w="w-[44px]" lines={["Analyze", "Data"]} icon={<TableArt><circle cx="10" cy="9" r="6" fill="#323130" /><path d="M14 13l6 6" strokeWidth="2" /><path d="M7 9h2v4H7zM10 6h3v7h-3z" fill="#3f9be8" stroke="none" /></TableArt>} />
        </XGroup>
        <span className="flex-1" />
        <Chev className="mt-[58px] mr-[7px] h-[5px] w-[7px] rotate-180" />
      </div>
      <div className="flex h-[32px] shrink-0 items-center px-[5px] font-['Lato',sans-serif] text-[10px]">
        <span className="flex h-[18px] w-[244px] items-center justify-between border border-[#4a4a4a] bg-[#373737] px-[5px]">D25 <Tri className="h-[3px] w-[5px]" /></span>
        <span className="mx-[14px] flex w-px flex-col gap-[2px]"><i className="h-px bg-[#ddd]" /><i className="h-px bg-[#ddd]" /><i className="h-px bg-[#ddd]" /></span>
        <span className="flex h-[18px] w-[79px] items-center justify-around border border-[#4a4a4a] bg-[#373737] text-[#777]"><span>✕</span><span>✓</span><i className="font-['Liberation_Serif',serif] font-bold text-[#ddd]">fx</i></span>
        <label className="ml-[2px] flex h-[18px] min-w-0 flex-1 items-center border border-[#4a4a4a] bg-[#373737] px-[8px]">
          <input aria-label="Formula" defaultValue="Oracle SR Testing Only" className="min-w-0 flex-1 outline-none" />
          <Chev className="h-[5px] w-[7px]" />
        </label>
      </div>
      <div className="flex min-h-0 flex-1 font-['Lato',sans-serif] text-[9px]">
        <table className="flex min-w-0 flex-1 flex-col bg-white text-black">
          <thead className="block">
            <tr className={`${colGrid} h-[14px] bg-[#262626] text-[#d0d0d0]`}>
              <th className="flex items-end justify-end border-r border-b border-[#5a5a5a] p-[2px]"><svg viewBox="0 0 8 8" className="size-[8px]" fill="#6f6f6f"><path d="M8 0v8H0z" /></svg></th>
              {letters.map((c) => (
                <th key={c} className="overflow-hidden border-r border-b border-[#4a4a4a] text-center leading-[13px] font-normal">{c}</th>
              ))}
            </tr>
          </thead>
          <tbody className="flex min-h-0 flex-1 flex-col">
            {Array.from({ length: 39 }, (_, i) => <SheetRow key={i} n={i + 1} />)}
          </tbody>
        </table>
        <div className="flex w-[16px] shrink-0 flex-col items-center bg-[#262626]">
          <span className="mt-px flex h-[12px] w-[11px] items-center justify-center bg-[#3a3a3a] text-[#999]"><Tri className="rotate-180" /></span>
          <span className="mt-px h-[430px] w-[10px] bg-[#525252]" />
          <span className="flex-1" />
          <span className="mb-px flex h-[12px] w-[11px] items-center justify-center bg-[#3a3a3a] text-[#999]"><Tri /></span>
        </div>
      </div>
      <div className="flex h-[20px] shrink-0 items-center text-[#8a8a8a]">
        <Tri className="ml-[18px] rotate-90" /><Tri className="ml-[13px] -rotate-90" />
        <button className="mb-[3px] ml-[28px] h-[17px] w-[46px] border-b-2 border-[#1e7145] bg-white font-['Lato',sans-serif] text-[10px] leading-[15px] font-bold text-[#1e7145]">Sheet1</button>
        <button aria-label="New sheet" className="ml-[23px] flex size-[12px] items-center justify-center rounded-full border border-white text-[11px] leading-none text-white">+</button>
        <span className="flex-1" />
        <span className="flex h-[11px] w-[530px] items-center bg-[#3a3a3a] px-[3px]"><Tri className="rotate-90" /><span className="ml-[4px] h-[9px] w-[330px] bg-[#525252]" /><span className="flex-1" /><Tri className="-rotate-90" /></span>
        <span className="w-[16px]" />
      </div>
      <footer className="flex h-[16px] shrink-0 items-center border-t border-[#3f3e3d] bg-[#323130] pl-[5px] whitespace-nowrap text-[#d8d8d8]">
        Ready
        <svg viewBox="0 0 12 12" className="ml-[13px] size-[10px]" fill="none" stroke="#ddd"><path d="M5 10.500H.5v-10h10V4M1 3h9M3 5.500h2M3 8h1" /><circle cx="8" cy="8" r="3" /><circle cx="8" cy="8" r="1" /></svg>
        <span className="ml-auto">Count: 30</span>
        <span className="mr-[18px] ml-[16px] flex items-center gap-[3px]"><Monitor className="size-[9px]" />Display Settings</span>
        <span className="mr-[16px] flex gap-[14px]">
          <TableMini /><TableMini /><TableMini />
        </span>
        <label className="mr-[8px] flex w-[92px] items-center gap-[4px]">
          <span>−</span>
          <input type="range" aria-label="Zoom" defaultValue={50} className="h-px w-[72px] appearance-none bg-[#8a8a8a] [&::-webkit-slider-thumb]:h-[8px] [&::-webkit-slider-thumb]:w-[3px] [&::-webkit-slider-thumb]:appearance-none [&::-webkit-slider-thumb]:bg-[#d0d0d0]" />
          <span>+</span>
        </label>
        <span className="mr-[8px]">100%</span>
      </footer>
    </section>
  );
}

/* ---------- UiPath Studio ---------- */

function UBtn({ w, icon, lines, drop, dim }: { w: string; icon: ReactNode; lines: string[]; drop?: boolean; dim?: boolean }) {
  return (
    <button className={`flex shrink-0 flex-col items-center leading-[9px] whitespace-nowrap ${w} ${dim ? "text-[#9a9a9a]" : "text-[#111]"}`}>
      <span className="mt-[5px] mb-[7px] flex h-[18px] items-center">{icon}</span>
      {lines.map((l, i) => (
        <span key={l} className="flex items-center gap-[2px]">{l}{drop && lines.length > 1 && i === lines.length - 1 && <Chev />}</span>
      ))}
      {drop && lines.length === 1 && <Chev className="mt-[3px]" />}
    </button>
  );
}

function UArt({ children, dim }: { children: ReactNode; dim?: boolean }) {
  return <svg viewBox="0 0 18 18" className="size-[17px]" fill="none" stroke={dim ? "#b0b0b0" : "#6b6c6e"} strokeWidth="1.400">{children}</svg>;
}

function USep() {
  return <span className="mt-[3px] h-[48px] w-px shrink-0 bg-[#d5d7d8]" />;
}

function USmall({ icon, label }: { icon: ReactNode; label: string }) {
  return <button className="flex h-[16px] items-center gap-[3px] whitespace-nowrap text-[#8f8f8f]">{icon}{label}</button>;
}

const B = "#1976d2";

function Node({ box, title, lines }: { box: string; title: string; lines: string[] }) {
  return (
    <article className={`absolute flex flex-col rounded-[1px] border border-[#cfd2d3] bg-white ${box}`}>
      <h3 className="flex h-[15px] shrink-0 items-center gap-[6px] border-b border-[#cfd2d3] bg-[#f4f6f5] pl-[1px] text-black">
        <svg viewBox="0 0 12 10" className="h-[10px] w-[12px]" fill="none" stroke="#777"><path d="M0 1h12" strokeWidth="2" /><path d="M11.500 1v8.500H6" strokeWidth="1.200" /><circle cx="2" cy="7" r="1.500" /></svg>
        {title}
      </h3>
      <p className="flex-1 pt-[4px] pl-[15px] leading-[11px] whitespace-nowrap text-[#444]">
        {lines.map((l) => <span key={l} className="block">{l}</span>)}
      </p>
      <div className="flex items-center justify-between pr-[11px] pb-[4px] pl-[10px]">
        <svg viewBox="0 0 14 10" className="h-[11px] w-[14px]" fill="none" stroke="#333"><circle cx="9" cy="5" r="4.200" strokeWidth="1.300" /><path d="M0 5h7M4 2.500L7 5 4 7.500" strokeWidth="1.500" /></svg>
        <svg viewBox="0 0 9 8" className="h-[7px] w-[8px]" fill="#bbb"><path d="M6 0h2v2H6zM3 3h2v2H3zM6 3h2v2H6zM0 6h2v2H0zM3 6h2v2H3zM6 6h2v2H6z" /></svg>
      </div>
    </article>
  );
}

function Pill({ box, text }: { box: string; text: string }) {
  return <span className={`absolute flex h-[14px] items-center justify-center rounded-full border border-[#cfd2d3] bg-white whitespace-nowrap text-[#1f2a4d] ${box}`}>{text}</span>;
}

const messages = [
  { dim: true, lines: ["The restore inputs for", "'GermanSalesCo_Performer' have not changed.", "No further actions are required to complete the", "restore."] },
  { dim: false, lines: ["Assets file has not changed. Skipping assets file", "writing. Path: C:\\Users\\561625\\Documents", "\\GitHub\\UiPath-Work", "\\GermanSalesCo_Performer.1.0.32 (Optimized &", "Integrated)\\.local\\AllDependencies.json"] },
  { dim: true, lines: ["No-Op restore. The cache will not be updated.", "Path: C:\\Users\\561625\\Documents\\GitHub", "\\UiPath-Work\\GermanSalesCo_Performer.1.0.32", "(Optimized & Integrated)\\.local\\nuget.cache"] },
];

function PinTiny() {
  return <svg viewBox="0 0 6 10" className="h-[9px] w-[6px]" fill="none" stroke="#555"><path d="M1.500 0v5M4.500 0v5M1.500.5h3M0 5.500h6M3 6v4" /></svg>;
}

function Diagram() {
  return (
    <div className="absolute top-[22px] bottom-[3px] left-[240px] w-[488px] border border-b-0 border-[#cfd2d3] bg-white">
      <h2 className="flex h-[14px] items-center border-b border-[#cfd2d3] bg-[#f4f6f5] pl-[2px] text-black">
        <svg viewBox="0 0 12 12" className="mr-[5px] size-[12px]" fill="none" stroke={B} strokeWidth="1.300"><path d="M1 4.500h3v3H1zM8 .7h3v3H8zM8 8.300h3v3H8z" /><path d="M2.500 4V2H7M2.500 8v2H7" stroke="#777" strokeWidth="1" /></svg>
        General Business Process
        <svg viewBox="0 0 8 10" className="mr-[4px] ml-auto h-[9px] w-[7px]" fill="none" stroke="#555"><path d="M1 5l3-4 3 4M1 9l3-4 3 4" /></svg>
      </h2>
      <p className="pt-[5px] pl-[15px] leading-[11px] text-[#444]">[Process title]<br />[Process description]<br />[Additional information (e.g., author, contact information and applications involved and required external setup)]</p>
      <svg className="absolute top-0 left-0 h-[541px] w-[488px]" viewBox="0 0 488 541" fill="none" stroke="#cfd0d4" strokeWidth="1.400">
        <path d="M104 102.500h21V101h38" stroke="#cdd3e6" />
        <path d="M260 138v66M260 160H72q-2 0-2 2v39M260 291v75M260 310q0 2-2 2H77q-2 0-2-2v-10" />
        <g fill="#a6a6a6" stroke="none">
          <path d="M170 101l-8-3.500v7zM260 210l-4-7h8zM70 207l-4-7h8zM260 373l-4-7h8zM75 293l-4 7h8zM351 105l8-3.500v7zM350 235l8-3.500v7zM350 267l8-3.500v7z" />
        </g>
      </svg>
      <div className="absolute top-[76px] left-[62px] flex h-[54px] w-[43px] flex-col items-center rounded-[3px] border border-[#cfd2d3] bg-white pt-[7px]">
        <svg viewBox="0 0 28 28" className="size-[28px]" fill="none"><circle cx="14" cy="14" r="13" stroke="#6f6f6f" strokeWidth="1.500" /><path d="M10 6.500v15L22 14z" fill={B} /></svg>
        <span className="mt-[2px] leading-[11px] text-[#1f2a4d]">Start</span>
      </div>
      <Node box="top-[66px] left-[170px] h-[73px] w-[181px]" title="Initialization" lines={["Read configuration file and initialize", "applications used in the process."]} />
      <Node box="top-[208px] left-[24px] h-[85px] w-[102px]" title="End Process" lines={["End process and", "close all", "applications used."]} />
      <Node box="top-[211px] left-[170px] h-[80px] w-[179px]" title="Get Transaction Data" lines={["Get the next transaction to be", "processed."]} />
      <Node box="top-[374px] left-[178px] h-[133px] w-[164px]" title="Process Transaction" lines={["Process a single transaction.", "The result of the processing can be:", "1) Success, 2) Business Exception, 3)", "System Exception.", "In the case of a system exception,", "the transaction can be", "automatically retried."]} />
      <Pill box="top-[153px] left-[136px] w-[60px]" text="System Exce..." />
      <Pill box="top-[178px] left-[237px] w-[47px]" text="Successful" />
      <Pill box="top-[305px] left-[149px] w-[38px]" text="No Data" />
      <Pill box="top-[325px] left-[229px] w-[63px]" text="New Transact..." />
      <Pill box="top-[309px] left-[343px] w-[60px]" text="System Exce..." />
      <Pill box="top-[375px] left-[341px] w-[60px]" text="Business Exc..." />
      <Pill box="top-[388px] left-[353px] w-[36px]" text="Success" />
      <svg className="absolute top-0 left-0 h-[541px] w-[488px]" viewBox="0 0 488 541" fill="none" stroke="#cfd0d4" strokeWidth="1.400">
        <path d="M227 507v19q0 2 2 2h141q2 0 2-2V107q0-2-2-2h-12M268 507v19q0 1 2 1h99q2 0 2-2V237q0-2-2-2h-12M301 507v14q0 2 2 2h67V269q0-2-2-2h-11" />
        <g fill="#f4f6f5" strokeWidth="1">
          <circle cx="260" cy="138" r="3.500" /><circle cx="260" cy="291" r="3.500" /><circle cx="227" cy="507" r="3.500" /><circle cx="268" cy="507" r="3.500" /><circle cx="301" cy="507" r="3.500" />
        </g>
      </svg>
    </div>
  );
}

function ReportIcon() {
  return <svg viewBox="0 0 11 10" className="h-[9px] w-[10px]"><path d="M0 0h11v10H0z" fill="#ddd" /><path d="M0 0h11v3H0z" fill="#666" /><path d="M5 5h3v5H5z" fill="#e06a2b" /></svg>;
}

function Studio() {
  return (
    <section aria-label="UiPath Studio" className="flex min-h-0 flex-1 flex-col bg-[#f4f6f5] text-[8px] text-[#222]">
      <header className="flex h-[21px] shrink-0 items-center bg-[#3481d2] text-white">
        <button className="w-[51px] text-[9px]">HOME</button>
        <button className="h-full w-[55px] bg-[#fcfcfc] text-[9px] text-[#1976d2]">DESIGN</button>
        <button className="w-[50px] text-[9px]">DEBUG</button>
        <span className="ml-[447px] whitespace-nowrap">GermanSalesCo_Performer - UiPath Studio</span>
        <span className="flex-1" />
        <Search className="size-[11px] -scale-x-100" strokeWidth={2.5} />
        <svg viewBox="0 0 12 12" className="ml-[11px] size-[11px]" fill="none" stroke="currentColor"><path d="M3 .5h8.500v5H9l-1 2" /><circle cx="5" cy="5" r="2" /><path d="M1 12a4 4 0 018 0" /></svg>
        <span className="ml-[8px] flex size-[11px] items-center justify-center rounded-full border border-white text-[8px]">?</span><Chev className="ml-px" />
        <span className="ml-[6px] flex size-[17px] items-center justify-center rounded-full bg-white text-[8px] font-semibold text-[#222]">KC</span>
        <span className="ml-[16px] h-px w-[7px] bg-white" />
        <svg viewBox="0 0 10 10" className="ml-[23px] size-[8px]" fill="none" stroke="currentColor"><path d="M.5 2.500h7v7h-7zM2.500 2V.5h7v7H8" /></svg>
        <svg viewBox="0 0 10 10" className="mr-[12px] ml-[23px] size-[8px]" stroke="currentColor"><path d="M0 0l10 10M10 0L0 10" /></svg>
      </header>
      <div className="flex h-[54px] shrink-0 border-b border-[#d5d7d8] bg-[#fcfcfc] pl-[2px]">
        <UBtn w="w-[24px]" drop lines={["New"]} icon={<UArt><path d="M2 1h8l4 4v7M14 5h-4V1M2 1v16h9" /><path d="M15 12v6M12 15h6" stroke={B} /></UArt>} />
        <UBtn w="w-[22px]" drop lines={["Save"]} icon={<UArt><path d="M1 1h16v16H3l-2-2zM5 17v-5h8v5" /><path d="M5 3.500h8M5 6h8M5 8h8" stroke={B} /></UArt>} />
        <UBtn w="w-[41px]" lines={["Export as", "Template"]} icon={<UArt><path d="M2 1h8l4 4v5M2 1v16h5" /><path d="M8 17c0-3 2-4 5-4v-3l5 4.500-5 4V15c-2 0-4 0-5 2z" fill={B} stroke="none" /></UArt>} />
        <UBtn w="mr-[5px] w-[30px]" drop lines={["Debug", "File"]} icon={<UArt><path d="M3 1l13 8-13 8z" fill={B} stroke="none" /></UArt>} />
        <USep />
        <div className="w-[41px] shrink-0 pt-[3px] pl-[9px]">
          <USmall label="Cut" icon={<Scissors strokeWidth={1.5} className="size-[11px] -rotate-90" />} />
          <USmall label="Copy" icon={<Copy strokeWidth={1.5} className="size-[11px]" />} />
          <USmall label="Paste" icon={<Clipboard strokeWidth={1.5} className="size-[11px]" />} />
        </div>
        <div className="w-[54px] shrink-0 pt-[3px] pl-[9px]">
          <USmall label="Undo" icon={<Undo2 strokeWidth={1.5} className="size-[12px]" />} />
          <USmall label="Redo" icon={<Redo2 strokeWidth={1.5} className="size-[12px]" />} />
        </div>
        <USep />
        <UBtn w="w-[53px]" lines={["Manage", "Packages"]} icon={<UArt><path d="M1 8l5-2 4 3-4 2zM2 10v5l6 3v-6zM16 8l-4-2" fill="#666" /><path d="M9 0l3 4h-2v4H7V4H5z" fill={B} stroke="none" /><circle cx="14.500" cy="14" r="2.600" stroke={B} /></UArt>} />
        <USep />
        <UBtn dim w="w-[48px]" lines={["Manage", "Entities"]} icon={<UArt dim><ellipse cx="6" cy="5" rx="5" ry="2" /><path d="M1 5v9c0 3 10 3 10 0V5M1 8c0 3 10 3 10 0M1 11c0 3 10 3 10 0" /><ellipse cx="13" cy="2.500" rx="4" ry="2" fill="#b0b0b0" /><path d="M17 3v8c0 2-3 3-5 3M17 14l-4 4" /></UArt>} />
        <USep />
        <UBtn w="ml-[4px] w-[47px]" drop lines={["Recording"]} icon={<UArt><circle cx="9" cy="9" r="8" /><circle cx="9" cy="9" r="3.500" fill={B} stroke="none" /></UArt>} />
        <UBtn w="w-[40px]" lines={["Screen", "Scraping"]} icon={<UArt><path d="M1 5h16v10H1zM6 17h6" /><path d="M3.500 7.500h11v5h-11z" stroke={B} strokeDasharray="1 1" /></UArt>} />
        <UBtn w="w-[40px]" lines={["Data", "Scraping"]} icon={<UArt><path d="M1 1h16v16H1z" strokeDasharray="1.500 1.500" strokeWidth="2" /><path d="M4 5h10v8H4zM4 8h10M4 10.500h10M7.500 5v8M11 5v8" stroke={B} strokeWidth="1" /></UArt>} />
        <UBtn w="mr-[5px] w-[37px]" drop lines={["User", "Events"]} icon={<UArt><path d="M1 1h16v16H1z" /><path d="M3 4h6M3 6h6M3 8h6" stroke={B} strokeDasharray="1 1" /><ellipse cx="12.500" cy="12" rx="2.500" ry="3.500" fill={B} stroke="none" /></UArt>} />
        <USep />
        <UBtn w="w-[49px]" lines={["UI", "Explorer"]} icon={<UArt><path d="M9 0l8 4.500v9L9 18l-8-4.500v-9z" fill={B} stroke="none" /><path d="M5 6h3v6h3M8 6h5M5 12h3" stroke="#fff" /></UArt>} />
        <USep />
        <UBtn w="w-[50px]" drop lines={["Remove", "Unused"]} icon={<UArt><circle cx="9" cy="9" r="8" /><path d="M6 5.500l6 7M12 5.500l-6 7" stroke={B} strokeWidth="3" /></UArt>} />
        <USep />
        <UBtn w="w-[44px]" drop lines={["Analyze", "File"]} icon={<UArt><path d="M3 1H1v5c0 4 5 4 5 0V1H4M3.500 9v4c0 4 5 4 6 3M12 3.500a2 2 0 104 0 2 2 0 10-4 0M14 6v4M11 10h4l2 2v5h-6z" /></UArt>} />
        <USep />
        <UBtn w="w-[57px]" drop lines={["Test", "Manager"]} icon={<UArt><path d="M5 1h8M7 1v6L2 17h14L11 7V1" /><path d="M5.500 12h7l2 4h-11z" fill={B} stroke="none" /></UArt>} />
        <USep />
        <UBtn w="w-[46px]" lines={["Export", "to Excel"]} icon={<UArt><path d="M2 2l9-1.500v17L2 16z" fill={B} stroke="none" /><path d="M4.500 6l4 6M8.500 6l-4 6" stroke="#fff" /><path d="M12 2h4v14h-4z" fill="#777" stroke="none" /></UArt>} />
        <USep />
        <UBtn w="w-[42px]" drop lines={["Publish"]} icon={<UArt><path d="M9 0l5 6h-3v8H7V6H4z" fill={B} stroke="none" /><path d="M1 13v4h16v-4" strokeWidth="2" /></UArt>} />
        <USep />
        <span className="flex-1" />
        <Chev className="mt-[46px] mr-[5px] h-[5px] w-[7px] rotate-180" />
      </div>
      <div className="flex min-h-0 flex-1 pt-[5px]">
        <aside className="ml-[5px] flex w-[204px] shrink-0 flex-col">
          <div className="flex min-h-0 flex-1 flex-col border border-[#e1e3e3] bg-white">
            <div className="bg-[#fafafa]">
              <h2 className="flex h-[17px] items-center pl-[4px] text-[9px] text-[#111]">Output<span className="mx-[6px] h-[5px] flex-1 bg-[radial-gradient(#bbb_25%,transparent_30%)] bg-[length:3px_3px]" /><Chev className="mr-[7px] h-[5px] w-[7px]" /><span className="mr-[6px]"><PinTiny /></span></h2>
              <div className="flex h-[20px] items-center justify-between pr-[2px] pl-[8px]"><Clock strokeWidth={1.7} className="size-[12px] text-[#555]" /><span className="mt-[10px] flex flex-col items-center"><span className="h-px w-[5px] bg-[#333]" /><Tri className="h-[3px] w-[5px]" /></span></div>
            </div>
            <input aria-label="Search output" placeholder="Search" className="h-[17px] shrink-0 border border-[#d5d7d8] pl-[2px] outline-none placeholder:text-[#a0a0a0]" />
            <ul className="pt-[2px] leading-[11px] whitespace-nowrap">
              {messages.map((m) => (
                <li key={m.lines[0]} className={`mb-[2px] flex ${m.dim ? "text-[#666]" : "text-[#111]"}`}>
                  <span className={`mx-[4px] mt-[3px] flex size-[6px] items-center justify-center rounded-full border text-[5px] leading-none ${m.dim ? "border-[#777]" : "border-[#3f63d0] text-[#3f63d0]"}`}>i</span>
                  <span>{m.lines.map((l) => <span key={l} className="block">{l}</span>)}</span>
                </li>
              ))}
            </ul>
          </div>
          <div className="flex h-[16px] shrink-0 items-center text-[#333]">
            <button className="flex items-center gap-[4px] pl-[3px]"><i className="h-[8px] w-[10px] border border-[#777]" />Project</button>
            <button className="flex items-center gap-[4px] pl-[9px]"><Clipboard className="size-[10px]" />Activities</button>
            <button className="mx-[4px] h-full border border-t-0 border-[#e1e3e3] bg-[#fcfcfc] px-[4px] text-[#1976d2]">Output</button>
            <button className="flex items-center gap-[4px]"><Copy strokeWidth={1.5} className="size-[10px]" />Snippets</button>
          </div>
        </aside>
        <main className="ml-[4px] flex min-w-0 flex-1 flex-col">
          <div className="flex h-[17px] shrink-0 items-center border-b-2 border-[#1976d2]">
            <button className="flex h-full w-[42px] items-center gap-[6px] bg-[#1976d2] pl-[5px] text-white">Main<svg viewBox="0 0 8 8" className="size-[7px]" stroke="currentColor"><path d="M0 0l8 8M8 0L0 8" /></svg></button>
            <Chev className="mr-[6px] ml-auto h-[5px] w-[7px]" />
          </div>
          <div className="flex h-[20px] shrink-0 items-center gap-[7px] border border-[#d5d7d8] bg-white px-[4px]"><span className="flex-1">Main</span><button>Expand All</button><button>Collapse All</button></div>
          <div className="relative min-h-0 flex-1 overflow-hidden bg-white">
            <Diagram />
            <div className="absolute top-[2px] right-[1px] bottom-[2px] flex w-[10px] flex-col gap-[1px]">
              <span className="flex h-[10px] items-center justify-center border border-[#ccc] text-[#999]"><Tri className="rotate-180" /></span>
              <span className="h-[428px] border border-[#ccc] bg-white" />
              <span className="flex-1" />
              <span className="flex h-[10px] items-center justify-center border border-[#ccc] text-[#999]"><Tri /></span>
            </div>
          </div>
          <div className="flex h-[17px] shrink-0 items-center gap-[10px] border-b border-[#e1e3e3] bg-[#f1f1f1] px-[4px] text-[#111]">
            <button>Variables</button><button>Arguments</button><button>Imports</button>
            <span className="flex-1" />
            <Hand className="size-[11px]" fill="#555" /><Search className="size-[10px] -scale-x-100" />
            <label className="flex items-center"><select aria-label="Zoom" className="w-[42px] appearance-none outline-none"><option>100%</option></select><Tri className="h-[3px] w-[4px]" /></label>
            <i className="size-[9px] border-2 border-dashed border-[#666]" /><i className="mr-[2px] size-[9px] border-2 border-[#777] bg-[#ccc]" />
          </div>
        </main>
        <aside className="ml-[5px] flex w-[146px] shrink-0 flex-col">
          <div className="flex min-h-0 flex-1 flex-col border border-[#e1e3e3] bg-white">
            <h2 className="flex h-[16px] items-center border-b border-[#d5d7d8] bg-[#fafafa] pl-[4px] text-[#111]">Properties<span className="mx-[6px] h-[5px] flex-1 bg-[radial-gradient(#bbb_25%,transparent_30%)] bg-[length:3px_3px]" /><Chev className="mr-[7px] h-[5px] w-[7px]" /><span className="mr-[6px]"><PinTiny /></span></h2>
            <div className="h-[20px] bg-[#f4f6f5] pl-[2px] leading-[19px] text-[#222]">System.Activities.ActivityBuilder</div>
            <div className="flex h-[14px] items-center gap-[5px] border border-dotted border-[#555] bg-[#f4f6f5] font-bold text-black"><i className="flex size-[7px] items-center justify-center border border-[#333]"><i className="h-px w-[3px] bg-black" /></i>Misc</div>
            <dl className="ml-[10px] flex h-[15px] items-center border-b border-[#eee]"><dt className="w-[80px] border-r border-[#eee] pl-[5px] leading-[15px]">DisplayName</dt><dd className="pl-[3px]">Main</dd></dl>
          </div>
          <div className="flex h-[16px] shrink-0 items-center justify-between pr-[8px] pl-[4px]">
            <span className="flex items-center gap-[4px]"><ReportIcon />O...</span>
            <span className="flex h-full items-center gap-[4px] border border-t-0 border-[#e1e3e3] bg-[#fcfcfc] px-[3px] text-[#1976d2]"><Wrench className="size-[10px] text-[#444]" />P...</span>
            <span className="flex items-center gap-[4px]"><svg viewBox="0 0 10 10" className="size-[10px]" stroke="#444"><path d="M0 1h4M3 4h6M3 6.500h6M3 9h6M1.500 2v7" /></svg>O...</span>
            <span className="flex items-center gap-[4px]"><svg viewBox="0 0 10 10" className="size-[10px]" fill="none" stroke="#666"><path d="M3 .5h4M4 .5v3L1 9.500h4" /><circle cx="7" cy="7" r="2" stroke={B} /></svg>T...</span>
          </div>
        </aside>
        <aside className="flex w-[23px] shrink-0 flex-col items-center">
          <svg viewBox="0 0 10 12" className="h-[11px] w-[9px]" fill="none"><path d="M1 5V.5h8.500v9" stroke="#666" /><path d="M0 6h4v2H0zM5 6h3v2H5zM0 9h3v3H0zM5 9h3v3H5z" fill={B} /></svg>
          <button className="mt-[3px] text-[8px] leading-[12px] [writing-mode:vertical-rl]">Resources</button>
        </aside>
      </div>
      <div className="flex h-[21px] shrink-0 gap-[12px] pt-[5px] pl-[6px] text-[#4a3a3a]">
        {["Error List", "Find References", "Breakpoints"].map((t) => <button key={t} className="border-b-4 border-[#ececec] leading-[11px]">{t}</button>)}
      </div>
      <footer className="flex h-[17px] shrink-0 items-center bg-[#1976d2] pr-[11px] whitespace-nowrap text-white">
        <span className="ml-auto flex h-[9px] w-[8px] items-center justify-center rounded-[1px] bg-white"><i className="size-[4px] rounded-full border border-[#1976d2]" /></span><Chev className="mr-[15px] ml-[4px] opacity-60" />
        <i className="mr-[5px] size-[5px] rounded-full bg-[#5ac50f]" />USPHC/CCIR/COR089/CCIR0...<Chev className="mr-[24px] ml-[5px] opacity-60" />
        <Upload className="mr-[2px] size-[9px]" />0
        <Pencil className="mr-[2px] ml-[13px] size-[9px]" fill="#fff" />2
        <i className="mr-[6px] ml-[13px] size-[7px] rotate-45 bg-white" />GermanSalesCo_Performer.1.0.32
        <GitBranch className="mr-[3px] ml-[10px] size-[9px]" />main<Chev className="mr-[14px] ml-[4px] opacity-60" />
        VB, Windows - Legacy
      </footer>
    </section>
  );
}

/* ---------- desktop ---------- */

export default function App() {
  return (
    <div className="flex h-screen w-full overflow-hidden font-['Open_Sans','Noto_Sans',sans-serif]">
      <div className="flex min-w-0 flex-1 flex-col">
        <div className="relative flex-1 bg-[linear-gradient(80deg,#00a9fc_0%,#00b2fb_30%,#0096ec_52%,#0456d0_76%,#0340b8_100%)]">
          <Explorer />
        </div>
        <Taskbar large tone="bg-gradient-to-r from-[#21343e] to-[#17213f]">
          <time className="pr-[12px] text-right text-[12px] leading-[19px]">8:27 AM<br />3/4/2022</time>
        </Taskbar>
      </div>
      <div className="flex min-w-0 flex-1 flex-col">
        <Excel />
        <Taskbar tone="bg-gradient-to-r from-[#22373f] to-[#17213f]">
          <span className="flex items-center pr-[12px] text-[9px] whitespace-nowrap">53°F&nbsp; Mostly cloudy</span>
          <span className="flex items-center gap-[4px] pr-[9px]">
            <ChevronUp className="size-[9px]" /><Cloud className="size-[9px]" fill="#fff" /><Mic className="size-[9px]" /><BatteryFull className="size-[10px]" /><Wifi className="size-[9px]" /><Volume2 className="size-[9px]" />
          </span>
          <time className="pt-[1px] text-right text-[8px] leading-[13px]">8:27 AM<br />3/4/2022</time>
          <button aria-label="Notifications" className="mr-[22px] ml-[12px]"><MessageSquareText strokeWidth={1.5} className="size-[12px]" /></button>
        </Taskbar>
      </div>
      <div className="flex min-w-0 flex-1 flex-col">
        <Studio />
        <Taskbar tone="bg-gradient-to-r from-[#22373f] to-[#1b2340]">
          <time className="pr-[8px] pt-[1px] text-right text-[8px] leading-[13px]">8:27 AM<br />3/4/2022</time>
        </Taskbar>
      </div>
    </div>
  );
}
